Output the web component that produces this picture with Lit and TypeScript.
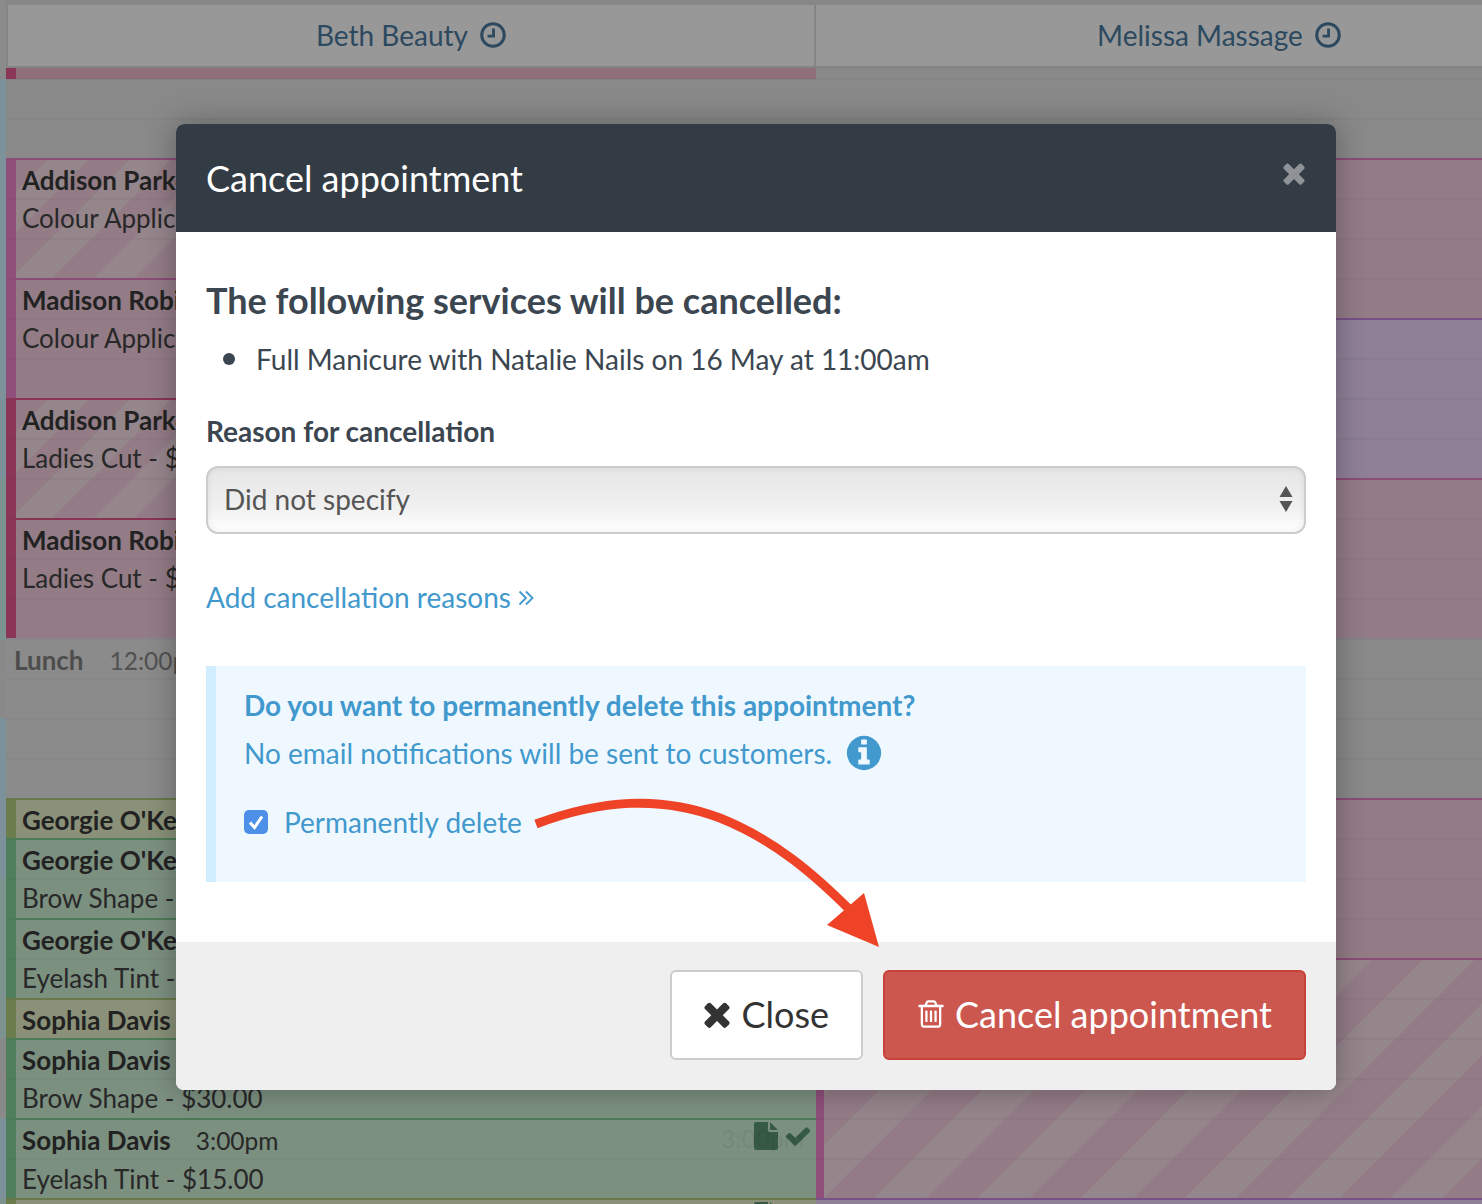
import {LitElement, html, css, svg} from 'lit';
import {customElement} from 'lit/decorators.js';

const ICON_X = "M1490 1322q0 40-28 68l-136 136q-28 28-68 28t-68-28l-294-294-294 294q-28 28-68 28t-68-28l-136-136q-28-28-28-68t28-68l294-294-294-294q-28-28-28-68t28-68l136-136q28-28 68-28t68 28l294 294 294-294q28-28 68-28t68 28l136 136q28 28 28 68t-28 68l-294 294 294 294q28 28 28 68z"
const ICON_CHECK = "M1671 566q0 40-28 68l-724 724-136 136q-28 28-68 28t-68-28l-136-136-362-362q-28-28-28-68t28-68l136-136q28-28 68-28t68 28l294 295 656-657q28-28 68-28t68 28l136 136q28 28 28 68z"
const ICON_INFO = "M1152 1376v-160q0-14-9-23t-23-9h-96v-512q0-14-9-23t-23-9h-320q-14 0-23 9t-9 23v160q0 14 9 23t23 9h96v320h-96q-14 0-23 9t-9 23v160q0 14 9 23t23 9h448q14 0 23-9t9-23zm-128-896v-160q0-14-9-23t-23-9h-192q-14 0-23 9t-9 23v160q0 14 9 23t23 9h192q14 0 23-9t9-23zm640 416q0 209-103 385.5t-279.5 279.5-385.5 103-385.5-103-279.5-279.5-103-385.5 103-385.5 279.5-279.5 385.5-103 385.5 103 279.5 279.5 103 385.5z"
const ICON_TRASH = "M704 736v576q0 14-9 23t-23 9h-64q-14 0-23-9t-9-23v-576q0-14 9-23t23-9h64q14 0 23 9t9 23zm256 0v576q0 14-9 23t-23 9h-64q-14 0-23-9t-9-23v-576q0-14 9-23t23-9h64q14 0 23 9t9 23zm256 0v576q0 14-9 23t-23 9h-64q-14 0-23-9t-9-23v-576q0-14 9-23t23-9h64q14 0 23 9t9 23zm128 724v-948h-896v948q0 22 7 40.5t14.5 27 10.5 8.5h832q3 0 10.5-8.5t14.5-27 7-40.5zm-672-1076h448l-48-117q-7-9-17-11h-317q-10 2-17 11zm928 32v64q0 14-9 23t-23 9h-96v948q0 83-47 143.5t-113 60.5h-832q-66 0-113-58.5t-47-141.5v-952h-96q-14 0-23-9t-9-23v-64q0-14 9-23t23-9h309l70-167q15-37 54-63t79-26h320q40 0 79 26t54 63l70 167h309q14 0 23 9t9 23z"

const icon = (d: string, cls: string) => html`<svg class=${cls} viewBox="0 0 1792 1792" fill="currentColor"><path d=${d}></path></svg>`

const clock = html`<svg class="clock" viewBox="0 0 24 24" fill="none" stroke="currentColor">
    <circle cx="12" cy="12" r="10.4" stroke-width="2.8"></circle>
    <path d="M12.5 6v7H7" stroke-width="2.6"></path>
</svg>`

const file = html`<svg class="ifile" viewBox="0 0 24 28" fill="currentColor">
    <path d="M2 0h12v8a2 2 0 0 0 2 2h8v16a2 2 0 0 1-2 2H2a2 2 0 0 1-2-2V2a2 2 0 0 1 2-2zM16 0l8 8h-8z"></path>
</svg>`

// kind: pink | purple | green | olive | grey
interface Slot {
    h: number
    kind: string
    bar?: string
    stripes?: boolean
    name?: string
    sub?: string
    time?: string
    done?: boolean
}

const beth: Slot[] = [
    {h: 11, kind: 'pink flat', bar: 'crimson'},
    {h: 79, kind: 'grey'},
    {h: 120, kind: 'pink', bar: 'magenta', stripes: true, name: 'Addison Parker', sub: 'Colour Application - $80.00'},
    {h: 120, kind: 'pink', bar: 'magenta', name: 'Madison Robinson', sub: 'Colour Application - $80.00'},
    {h: 120, kind: 'pink crim', bar: 'crimson', stripes: true, name: 'Addison Parker', sub: 'Ladies Cut - $50.00'},
    {h: 120, kind: 'pink crim', bar: 'crimson', name: 'Madison Robinson', sub: 'Ladies Cut - $50.00'},
    {h: 160, kind: 'lunch'},
    {h: 40, kind: 'olive', bar: 'olivebar', name: "Georgie O'Keefe"},
    {h: 80, kind: 'green', bar: 'greenbar', name: "Georgie O'Keefe", sub: 'Brow Shape - $30.00'},
    {h: 80, kind: 'green', bar: 'greenbar', name: "Georgie O'Keefe", sub: 'Eyelash Tint - $15.00'},
    {h: 40, kind: 'olive', bar: 'olivebar', name: 'Sophia Davis'},
    {h: 80, kind: 'green', bar: 'greenbar', name: 'Sophia Davis', sub: 'Brow Shape - $30.00'},
    {h: 80, kind: 'green', bar: 'greenbar', name: 'Sophia Davis', time: '3:00pm', sub: 'Eyelash Tint - $15.00', done: true},
    {h: 10, kind: 'olive', bar: 'olivebar', done: true},
]

const melissa: Slot[] = [
    {h: 90, kind: 'grey'},
    {h: 160, kind: 'pink'},
    {h: 160, kind: 'purple'},
    {h: 160, kind: 'pink'},
    {h: 160, kind: 'grey'},
    {h: 160, kind: 'pink'},
    {h: 240, kind: 'pink over', bar: 'magenta', stripes: true},
    {h: 10, kind: 'purple'},
]

const gutter: [number, string][] = [
    [68, '#e8e8e8'], [11, '#e5e5e5'], [399, '#cff2ff'], [162, '#cff5f0'], [78, '#e5e5e5'],
    [160, '#cff2ff'], [160, '#cff5f0'], [80, '#e5e5e5'], [80, '#cff2ff'], [6, '#cff5f0'],
]

@customElement('app-root')
export class AppRoot extends LitElement {
    static styles = css`
        :host {
            display: block;
            position: relative;
            width: 1482px;
            height: 1204px;
            overflow: hidden;
            font-family: Lato, "Open Sans", sans-serif;
            font-size: 28px;
            color: #444;
        }
        .calendar {
            display: grid;
            grid-template-columns: 6px 810px 808px;
            grid-template-rows: 68px 1fr;
            height: 1204px;
            background: #e5e5e5;
        }
        .gutter {
            grid-row: 1 / 3;
            display: flex;
            flex-direction: column;
        }
        .head {
            display: flex;
            align-items: center;
            justify-content: center;
            gap: 12px;
            padding-bottom: 2px;
            background: #fefefe;
            color: #4b7a9e;
            border: solid #dcdcdc;
            border-width: 0 2px 2px;
            box-shadow: 0 -5px 0 0 #e2e2e2;
            margin-top: 5px;
        }
        .head + .head { border-left-width: 0; }
        .clock { width: 26px; height: 26px; }
        .col { position: relative; display: flex; flex-direction: column; overflow: hidden; }
        .col::after {
            content: '';
            position: absolute;
            left: 0;
            right: 0;
            top: 10px;
            bottom: 0;
            background: repeating-linear-gradient(to bottom, rgba(0,0,0,.03) 0 2px, transparent 2px 40px);
        }
        .slot {
            position: relative;
            display: flex;
            flex: none;
            box-sizing: border-box;
            overflow: hidden;
            border-top: 2px solid transparent;
        }
        .bar { flex: none; width: 10px; }
        .magenta { background: #ee84cc; }
        .crimson { background: #ea5a92; }
        .greenbar { background: #84d49a; }
        .olivebar { background: #b4d080; }
        .grey { background: #e5e5e5; border-top: 0; }
        .lunch { background: #e8e8e8; border-top: 0; }
        .lunch .text { padding: 3px 0 0 8px; color: #888; }
        .lunch .name { color: #808080; }
        .pink { background: #f5cfe0; border-top-color: #ee84cc; }
        .pink.crim { border-top-color: #ea5a92; }
        .pink.flat { border-top: 0; background: #f0b8cc; }
        .purple { background: #eed5fd; border-top-color: #cc8ce8; }
        .green { background: #cff0d6; border-top-color: #84d49a; }
        .olive { background: #e6f2c8; border-top-color: #b4d080; }
        .stripes {
            background-image: repeating-linear-gradient(135deg, #f5cfe0 0 29px, #f9dfe9 29px 58px);
        }
        .over { margin-left: -2px; }
        .over.stripes {
            background-image: repeating-linear-gradient(135deg, #f9dfe9 0 29px, #f5cfe0 29px 65px, #f9dfe9 65px 73px);
        }
        .text { padding: 1px 0 0 6px; white-space: nowrap; line-height: 38px; font-size: 26px; }
        .name { font-weight: 700; color: #3a3a3a; }
        .time { margin-left: 25px; font-size: 24.5px; font-weight: 400; }
        .marks {
            position: absolute;
            top: 2px;
            right: 4px;
            display: flex;
            align-items: center;
            gap: 6px;
            color: #5a9673;
        }
        .faded { position: absolute; right: 8px; top: -2px; font-size: 24.5px; line-height: 38px; opacity: .05; color: #000; }
        .ifile { width: 24px; height: 28px; flex: none; }
        .icheck { width: 28px; height: 28px; flex: none; }

        .backdrop { position: absolute; inset: 0; background: rgba(0,0,0,.4); }
        .modal {
            position: absolute;
            left: 176px;
            top: 124px;
            width: 1160px;
            border-radius: 8px;
            background: #fff;
            overflow: hidden;
            box-shadow: 0 0 30px rgba(0,0,0,.3);
            color: #3b4650;
        }
        .modal-head {
            display: flex;
            align-items: center;
            justify-content: space-between;
            height: 108px;
            padding: 0 30px;
            box-sizing: border-box;
            background: #333b44;
            color: #fff;
            font-size: 36px;
        }
        .modal-head .ix { width: 32px; height: 32px; color: #8f9397; margin: -10px -4px 0 0; }
        .modal-body { padding: 46px 30px 60px; }
        h3 { margin: 0; font-size: 36px; line-height: 44px; font-weight: 700; }
        ul { margin: 15px 0 0; padding: 0 0 0 17px; list-style: none; line-height: 44px; }
        li { display: flex; align-items: center; gap: 21px; }
        .dot { width: 12px; height: 12px; border-radius: 50%; background: #3b4650; }
        label.reason { display: block; margin-top: 28px; font-weight: 700; line-height: 44px; }
        .select {
            display: flex;
            align-items: center;
            justify-content: space-between;
            box-sizing: border-box;
            height: 68px;
            margin-top: 13px;
            padding: 0 11px 2px 16px;
            border: 2px solid #ccc;
            border-radius: 12px;
            background: linear-gradient(to bottom, #e6e6e6, #f0f0f0 60%, #fff);
            box-shadow: inset 0 0 6px rgba(0,0,0,.08);
            color: #555;
        }
        .arrows { width: 14px; height: 26px; color: #555; }
        a { display: flex; align-items: center; gap: 7px; margin-top: 41px; line-height: 44px; color: #4199cd; }
        .chevrons { width: 16px; height: 16px; margin-top: 2px; }
        .note {
            box-sizing: border-box;
            height: 216px;
            margin-top: 47px;
            padding: 17px 28px 0;
            background: #f0f8ff;
            border-left: 10px solid #d0eeff;
            color: #4199cd;
        }
        .note b { display: block; line-height: 44px; }
        .note p { display: flex; align-items: center; gap: 12px; margin: 4px 0 0; line-height: 44px; }
        .iinfo { width: 40px; height: 40px; }
        .check { display: flex; align-items: center; gap: 16px; margin-top: 25px; line-height: 44px; }
        .box { width: 24px; height: 24px; border-radius: 5px; background: #4d90e8; }
        .modal-foot {
            display: flex;
            justify-content: flex-end;
            gap: 20px;
            padding: 28px 30px 30px;
            background: #efefef;
        }
        button {
            display: flex;
            align-items: center;
            gap: 8px;
            height: 90px;
            padding: 0 32px 2px 30px;
            box-sizing: border-box;
            border-radius: 6px;
            border: 2px solid #ccc;
            background: #fff;
            color: #333;
            font: inherit;
            font-size: 36px;
        }
        button.plain { padding-left: 26px; gap: 5px; }
        button.danger { background: #cc574f; border-color: #c9423a; color: #fff; }
        .iclose { width: 38px; height: 38px; }
        .itrash { width: 32px; height: 32px; }
        .arrow { position: absolute; left: 0; top: 0; pointer-events: none; }
    `

    renderSlot(s: Slot) {
        const cls = `slot ${s.kind} ${s.stripes ? 'stripes' : ''}`
        return html`
            <div class=${cls} style="height:${s.h}px">
                ${s.bar ? html`<div class="bar ${s.bar}"></div>` : ''}
                ${s.kind === 'lunch' ? html`<div class="text"><span class="name">Lunch</span><span class="time" style="margin-left:26px">12:00pm</span></div>` : ''}
                ${s.name ? html`
                    <div class="text">
                        <div><span class="name">${s.name}</span>${s.time ? html`<span class="time">${s.time}</span>` : ''}</div>
                        ${s.sub ? html`<div>${s.sub}</div>` : ''}
                    </div>` : ''}
                ${s.done ? html`
                    <div class="marks">
                        ${s.time ? html`<span class="faded">${s.time}</span>` : ''}
                        ${file}
                        ${icon(ICON_CHECK, 'icheck')}
                    </div>` : ''}
            </div>
        `
    }

    render() {
        return html`
            <div class="calendar">
                <div class="gutter">
                    ${gutter.map(([h, c]) => html`<div style="height:${h}px;background:${c}"></div>`)}
                </div>
                <div class="head">Beth Beauty ${clock}</div>
                <div class="head">Melissa Massage ${clock}</div>
                <div class="col">${beth.map(s => this.renderSlot(s))}</div>
                <div class="col">${melissa.map(s => this.renderSlot(s))}</div>
            </div>
            <div class="backdrop"></div>
            <div class="modal">
                <div class="modal-head">
                    <span>Cancel appointment</span>
                    ${icon(ICON_X, 'ix')}
                </div>
                <div class="modal-body">
                    <h3>The following services will be cancelled:</h3>
                    <ul><li><span class="dot"></span>Full Manicure with Natalie Nails on 16 May at 11:00am</li></ul>
                    <label class="reason">Reason for cancellation</label>
                    <div class="select">
                        <span>Did not specify</span>
                        <svg class="arrows" viewBox="0 0 14 26" fill="currentColor">
                            <path d="M7 0l6.5 11H.5zM7 26L.5 15h13z"></path>
                        </svg>
                    </div>
                    <a>Add cancellation reasons
                        <svg class="chevrons" viewBox="0 0 16 16" fill="none" stroke="currentColor" stroke-width="1.8">
                            <path d="M1.5 1.5L8 8l-6.5 6.5M8 1.5L14.500 8 8 14.500"></path>
                        </svg>
                    </a>
                    <div class="note">
                        <b>Do you want to permanently delete this appointment?</b>
                        <p>No email notifications will be sent to customers. ${icon(ICON_INFO, 'iinfo')}</p>
                        <div class="check">
                            <svg class="box" viewBox="0 0 24 24">
                                <path d="M6 12.5l4.500 5L18 6.500" fill="none" stroke="#fff" stroke-width="3"></path>
                            </svg>
                            Permanently delete
                        </div>
                    </div>
                </div>
                <div class="modal-foot">
                    <button class="plain">${icon(ICON_X, 'iclose')} Close</button>
                    <button class="danger">${icon(ICON_TRASH, 'itrash')} Cancel appointment</button>
                </div>
            </div>
            <svg class="arrow" width="1482" height="1204">
                ${svg`<path d="M536 824C600 800 660 795 720 818C775 840 815 875 852 912" fill="none" stroke="#ee4327" stroke-width="9"></path>
                <polygon points="879,947 864,893 827,925" fill="#ee4327"></polygon>`}
            </svg>
        `
    }
}
